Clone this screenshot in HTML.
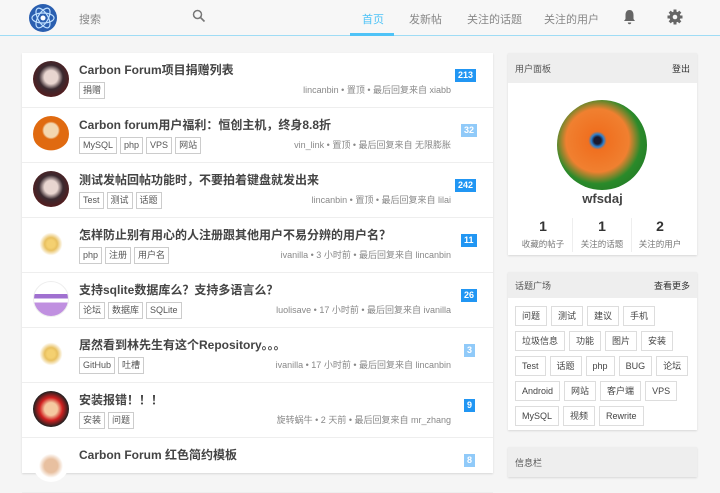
<!DOCTYPE html>
<html><head><meta charset="utf-8"><style>
*{margin:0;padding:0;box-sizing:border-box}
body{width:720px;height:465px;overflow:hidden;background:#f5f5f5;font-family:"Liberation Sans","Noto Sans CJK SC",sans-serif;position:relative;color:#555}
.nav{position:absolute;left:0;top:0;width:720px;height:36px;background:#f7f7f7;border-bottom:1px solid #9fdcf5}
.nav span{position:absolute;top:11px;font-size:11px;color:#888}
.card{position:absolute;background:#fff;box-shadow:0 1px 2px rgba(0,0,0,.12)}
.row{position:absolute;left:0;width:471px;height:55px;border-bottom:1px solid #eee}
.av{position:absolute;left:11px;top:8px;width:36px;height:36px;border-radius:50%}
.t{position:absolute;left:57px;top:8px;font-size:12px;font-weight:bold;color:#444;white-space:nowrap}
.tags{position:absolute;left:57px;top:29px;display:flex;gap:3px}
.tg{border:1px solid #ccc;font-size:9px;padding:2px 3px;color:#555;line-height:11px}
.m{position:absolute;right:42px;top:30px;font-size:9px;color:#888;white-space:nowrap}
.b{position:absolute;left:434px;top:16px;background:#2196f3;color:#fff;font-size:9px;font-weight:bold;padding:1px 3px;line-height:11px}
.ph{height:30px;background:#eee;font-size:9px;color:#555;padding:9px 7px;display:flex;justify-content:space-between}
.ph b{font-weight:normal;color:#333}
.st{position:absolute;top:165px;width:60px;text-align:center}
.st b{display:block;font-size:14px;color:#333}
.st i{font-style:normal;font-size:8.5px;color:#777}
.tc{display:flex;flex-wrap:wrap;gap:5px 4px;padding:8px 7px 0 7px}
.tc span{border:1px solid #ddd;font-size:9px;padding:4px 6px;color:#444;line-height:10px}
</style></head><body>
<div class="nav">
<svg style="position:absolute;left:28px;top:3px" width="30" height="30" viewBox="0 0 30 30"><circle cx="15" cy="15" r="14" fill="#2a5fb0"/><g fill="none" stroke="#bfe0ff" stroke-width="1.2"><ellipse cx="15" cy="15" rx="11" ry="5"/><ellipse cx="15" cy="15" rx="11" ry="5" transform="rotate(60 15 15)"/><ellipse cx="15" cy="15" rx="11" ry="5" transform="rotate(120 15 15)"/></g><circle cx="15" cy="15" r="2.5" fill="#fff"/></svg>
<span style="left:79px">搜索</span>
<svg style="position:absolute;left:192px;top:9px" width="14" height="14" viewBox="0 0 14 14"><circle cx="5.5" cy="5.5" r="4" fill="none" stroke="#777" stroke-width="1.5"/><path d="M8.5 8.5L12.5 12.5" stroke="#777" stroke-width="1.6"/></svg>
<span style="left:362px;color:#4fc3f7">首页</span>
<div style="position:absolute;left:350px;top:33px;width:44px;height:3px;background:#4fc3f7"></div>
<span style="left:409px">发新帖</span>
<span style="left:467px">关注的话题</span>
<span style="left:544px">关注的用户</span>
<svg style="position:absolute;left:622px;top:9px" width="15" height="16" viewBox="0 0 15 16"><path d="M7.5 1C4.5 1 3.5 3.5 3.5 6V10L2 12H13L11.5 10V6C11.5 3.5 10.5 1 7.5 1Z M5.8 13.5a1.7 1.7 0 0 0 3.4 0Z" fill="#666"/></svg>
<svg style="position:absolute;left:667px;top:9px" width="16" height="16" viewBox="0 0 16 16"><g fill="#666"><circle cx="8" cy="8" r="5.5"/><rect x="6.5" y="0.5" width="3" height="15"/><rect x="0.5" y="6.5" width="15" height="3"/><rect x="6.5" y="0.5" width="3" height="15" transform="rotate(45 8 8)"/><rect x="6.5" y="0.5" width="3" height="15" transform="rotate(-45 8 8)"/></g><circle cx="8" cy="8" r="2.3" fill="#f7f7f7"/></svg>
</div>

<div class="card" style="left:22px;top:53px;width:471px;height:420px">
<div class="row" style="top:0"><div class="av" style="background:radial-gradient(circle at 50% 45%,#e8d5d0 25%,#3a2a30 45%,#5a1a1a 80%)"></div><div class="t">Carbon Forum项目捐赠列表</div><div class="tags"><span class="tg">捐赠</span></div><div class="m">lincanbin • 置顶 • 最后回复来自 xiabb</div><div class="b" style="left:433px">213</div></div>
<div class="row" style="top:55px"><div class="av" style="background:radial-gradient(circle at 50% 40%,#f3d7b0 25%,#e06a10 32%,#e06a10 70%,#fff 72%)"></div><div class="t">Carbon forum用户福利：恒创主机，终身8.8折</div><div class="tags"><span class="tg">MySQL</span><span class="tg">php</span><span class="tg">VPS</span><span class="tg">网站</span></div><div class="m">vin_link • 置顶 • 最后回复来自 无限膨胀</div><div class="b" style="left:439px;background:#90caf9">32</div></div>
<div class="row" style="top:110px"><div class="av" style="background:radial-gradient(circle at 50% 45%,#e8d5d0 25%,#3a2a30 45%,#5a1a1a 80%)"></div><div class="t">测试发帖回帖功能时，不要拍着键盘就发出来</div><div class="tags"><span class="tg">Test</span><span class="tg">测试</span><span class="tg">话题</span></div><div class="m">lincanbin • 置顶 • 最后回复来自 lilai</div><div class="b" style="left:433px">242</div></div>
<div class="row" style="top:165px"><div class="av" style="background:radial-gradient(circle at 50% 50%,#f4d070 15%,#e8c060 25%,#fff 45%)"></div><div class="t">怎样防止别有用心的人注册跟其他用户不易分辨的用户名？</div><div class="tags"><span class="tg">php</span><span class="tg">注册</span><span class="tg">用户名</span></div><div class="m">ivanilla • 3 小时前 • 最后回复来自 lincanbin</div><div class="b" style="left:439px">11</div></div>
<div class="row" style="top:220px"><div class="av" style="background:linear-gradient(#fff 0,#fff 35%,#a070d0 35%,#a070d0 48%,#fff 48%,#fff 60%,#c090e0 60%);border:1px solid #eee"></div><div class="t">支持sqlite数据库么？支持多语言么？</div><div class="tags"><span class="tg">论坛</span><span class="tg">数据库</span><span class="tg">SQLite</span></div><div class="m">luolisave • 17 小时前 • 最后回复来自 ivanilla</div><div class="b" style="left:439px">26</div></div>
<div class="row" style="top:275px"><div class="av" style="background:radial-gradient(circle at 50% 50%,#f4d070 15%,#e8c060 25%,#fff 45%)"></div><div class="t">居然看到林先生有这个Repository。。。</div><div class="tags"><span class="tg">GitHub</span><span class="tg">吐槽</span></div><div class="m">ivanilla • 17 小时前 • 最后回复来自 lincanbin</div><div class="b" style="left:442px;background:#90caf9">3</div></div>
<div class="row" style="top:330px"><div class="av" style="background:radial-gradient(circle at 50% 50%,#f5c9a0 25%,#d02020 45%,#202020 70%)"></div><div class="t">安装报错！！！</div><div class="tags"><span class="tg">安装</span><span class="tg">问题</span></div><div class="m">旋转蜗牛 • 2 天前 • 最后回复来自 mr_zhang</div><div class="b" style="left:442px">9</div></div>
<div class="row" style="top:385px"><div class="av" style="background:radial-gradient(circle at 50% 55%,#e8c0a0 25%,#fff 45%)"></div><div class="t">Carbon Forum 红色简约模板</div><div class="b" style="left:442px;background:#90caf9">8</div></div>
</div>

<div class="card" style="left:508px;top:53px;width:189px;height:202px">
<div class="ph"><span>用户面板</span><b>登出</b></div>
<div style="position:absolute;left:49px;top:47px;width:90px;height:90px;border-radius:50%;background:radial-gradient(circle at 45% 45%,#1a1a30 5%,#2a80d0 9%,#f07020 13%,#f08030 45%,#2a8a2a 62%,#1a6a20 100%)"></div>
<div style="position:absolute;top:138px;width:189px;text-align:center;font-size:13px;font-weight:bold;color:#444">wfsdaj</div>
<div class="st" style="left:5px"><b>1</b><i>收藏的帖子</i></div>
<div class="st" style="left:64px;border-left:1px solid #eee;border-right:1px solid #eee"><b>1</b><i>关注的话题</i></div>
<div class="st" style="left:122px"><b>2</b><i>关注的用户</i></div>
</div>

<div class="card" style="left:508px;top:272px;width:189px;height:158px">
<div class="ph" style="height:26px;padding-top:7px"><span>话题广场</span><b>查看更多</b></div>
<div class="tc"><span>问题</span><span>测试</span><span>建议</span><span>手机</span><span>垃圾信息</span><span>功能</span><span>图片</span><span>安装</span><span>Test</span><span>话题</span><span>php</span><span>BUG</span><span>论坛</span><span>Android</span><span>网站</span><span>客户端</span><span>VPS</span><span>MySQL</span><span>视频</span><span>Rewrite</span></div>
</div>

<div class="card" style="left:508px;top:447px;width:189px;height:30px">
<div class="ph"><span>信息栏</span></div>
</div>
</body></html>
